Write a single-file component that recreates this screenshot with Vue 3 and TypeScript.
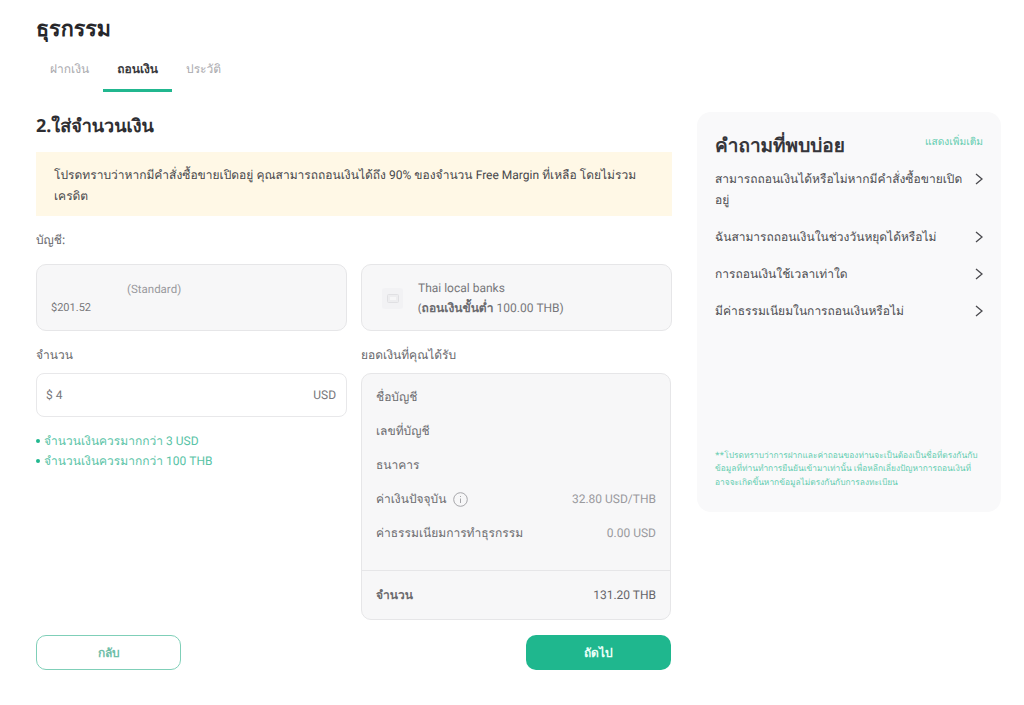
<script setup lang="ts">
const tabs = [
  { label: 'ฝากเงิน', active: false },
  { label: 'ถอนเงิน', active: true },
  { label: 'ประวัติ', active: false },
]
const faqs: string[][] = [
  ['สามารถถอนเงินได้หรือไม่หากมีคำสั่งซื้อขายเปิด', 'อยู่'],
  ['ฉันสามารถถอนเงินในช่วงวันหยุดได้หรือไม่'],
  ['การถอนเงินใช้เวลาเท่าใด'],
  ['มีค่าธรรมเนียมในการถอนเงินหรือไม่'],
]
const footnote = [
  '**โปรดทราบว่าการฝากและค่าถอนของท่านจะเป็นต้องเป็นชื่อที่ตรงกันกับ',
  'ข้อมูลที่ท่านทำการยืนยันเข้ามาเท่านั้น เพื่อหลีกเลี่ยงปัญหาการถอนเงินที่',
  'อาจจะเกิดขึ้นหากข้อมูลไม่ตรงกันกับการลงทะเบียน',
]
</script>

<template>
  <div class="page">
    <h1 class="title">ธุรกรรม</h1>
    <nav class="tabs">
      <span v-for="t in tabs" :key="t.label" class="tab" :class="{ active: t.active }">{{ t.label }}</span>
    </nav>
    <div class="columns">
      <main class="main">
        <h2 class="heading">2.ใส่จำนวนเงิน</h2>
        <p class="notice">โปรดทราบว่าหากมีคำสั่งซื้อขายเปิดอยู่ คุณสามารถถอนเงินได้ถึง <span class="lat">90%</span> ของจำนวน <span class="lat">Free Margin</span> ที่เหลือ โดยไม่รวม<br />เครดิต</p>
        <div class="label account-label">บัญชี:</div>
        <div class="two">
          <div class="card account">
            <div class="std">(Standard)</div>
            <div class="balance">$201.52</div>
          </div>
          <div class="card bank">
            <span class="bank-icon">
              <svg width="12" height="9" viewBox="0 0 12 9"><rect x="0.5" y="0.5" width="11" height="8" rx="1" fill="#ededef" stroke="#e0e0e3" /><rect x="3" y="3" width="6" height="3" fill="#f6f6f7" /></svg>
            </span>
            <div class="bank-text">
              <div class="lat">Thai local banks</div>
              <div>(<b class="semi">ถอนเงินขั้นต่ำ</b> <span class="lat">100.00 THB)</span></div>
            </div>
          </div>
        </div>
        <div class="two fields">
          <div>
            <div class="label">จำนวน</div>
            <div class="input"><span class="lat">$ 4</span><span class="lat">USD</span></div>
            <ul class="rules">
              <li><span>จำนวนเงินควรมากกว่า <span class="lat">3 USD</span></span></li>
              <li><span>จำนวนเงินควรมากกว่า <span class="lat">100 THB</span></span></li>
            </ul>
          </div>
          <div>
            <div class="label">ยอดเงินที่คุณได้รับ</div>
            <div class="summary">
              <div class="rows">
                <div class="row dark">ชื่อบัญชี</div>
                <div class="row dark">เลขที่บัญชี</div>
                <div class="row dark">ธนาคาร</div>
                <div class="row">
                  <span class="dark rate">ค่าเงินปัจจุบัน
                    <svg width="15" height="15" viewBox="0 0 15 15" fill="none" stroke="#a6a6aa"><circle cx="7.5" cy="7.5" r="6.8" /><path d="M7.5 4v1M7.5 6.5v4.5" /></svg>
                  </span>
                  <span class="lat">32.80 USD/THB</span>
                </div>
                <div class="row"><span class="dark">ค่าธรรมเนียมการทำธุรกรรม</span><span class="lat">0.00 USD</span></div>
              </div>
              <div class="total"><b class="semi">จำนวน</b><span class="lat">131.20 THB</span></div>
            </div>
          </div>
        </div>
        <div class="actions">
          <button class="btn back" type="button">กลับ</button>
          <button class="btn next" type="button">ถัดไป</button>
        </div>
      </main>
      <aside class="faq">
        <div class="faq-head">
          <h3>คำถามที่พบบ่อย</h3>
          <span class="more">แสดงเพิ่มเติม</span>
        </div>
        <div v-for="f in faqs" :key="f[0]" class="faq-row">
          <div>
            <div v-for="line in f" :key="line" class="line">{{ line }}</div>
          </div>
          <svg class="chev" width="8" height="12" viewBox="0 0 8 12" fill="none" stroke="#4a4a4e" stroke-width="1.3"><path d="M1 1l6 5-6 5" /></svg>
        </div>
        <div class="footnote">
          <div v-for="line in footnote" :key="line" class="line">{{ line }}</div>
        </div>
      </aside>
    </div>
  </div>
</template>

<style>
html, body { background: #fff; }
</style>

<style scoped>
.page {
  width: 1024px;
  height: 705px;
  box-sizing: border-box;
  padding: 15px 23px 0 36px;
  overflow: hidden;
  font-family: "Noto Sans", sans-serif;
  font-size: 12px;
  color: #77777b;
  text-rendering: geometricPrecision;
}
.line { white-space: nowrap; }
.lat { font-family: Roboto, sans-serif; font-size: 12px; }
.title {
  margin: 0;
  font-size: 21.5px;
  line-height: 28px;
  font-weight: 700;
  color: #26262a;
}
.tabs { display: flex; margin-top: 5px; }
.tab {
  height: 44px;
  padding: 0 14px;
  box-sizing: border-box;
  line-height: 42px;
  text-align: center;
  color: #a9a9ad;
}
.tab.active {
  color: #38383c;
  font-weight: 700;
  border-bottom: 3px solid #21b78f;
}
.columns { display: flex; gap: 25px; }
.main { width: 636px; flex: none; }
.heading {
  margin: 21px 0 0;
  font-size: 18px;
  line-height: 26px;
  font-weight: 700;
  color: #2e2e32;
}
.notice {
  margin: 13px 0 0;
  height: 64px;
  box-sizing: border-box;
  padding: 13px 18px;
  background: #fff8e6;
  color: #46464a;
  line-height: 19.5px;
  white-space: nowrap;
}
.label { line-height: 18px; color: #66666a; }
.account-label { margin-top: 15px; }
.two { display: grid; grid-template-columns: 311px 311px; gap: 14px; }
.card {
  height: 67px;
  margin-top: 15px;
  box-sizing: border-box;
  border: 1px solid #e6e6e8;
  border-radius: 10px;
  background: #f7f7f8;
  line-height: 18px;
}
.account { padding: 15px 14px; }
.std { padding-left: 76px; font-family: Roboto, sans-serif; font-size: 11.5px; color: #9a9a9e; }
.balance { font-family: Roboto, sans-serif; font-size: 11px; margin-top: 1px; }
.bank { display: flex; align-items: center; gap: 15px; padding: 2px 0 0 20px; }
.bank-text { line-height: 19px; }
.bank-icon {
  width: 21px;
  height: 21px;
  display: flex;
  align-items: center;
  justify-content: center;
  background: #f2f2f4;
  border-radius: 3px;
}
.semi { font-weight: 600; color: #6a6a6e; }
.fields { margin-top: 15px; }
.input {
  height: 44px;
  margin-top: 9px;
  box-sizing: border-box;
  display: flex;
  align-items: center;
  justify-content: space-between;
  padding: 0 10px 0 9px;
  border: 1px solid #e8e8ea;
  border-radius: 8px;
  background: #fff;
}
.rules {
  margin: 14px 0 0;
  padding: 0;
  list-style: none;
  color: #58c3a6;
  line-height: 20px;
}
.rules li { display: flex; align-items: center; gap: 4px; }
.rules li::before {
  content: "";
  width: 4px;
  height: 4px;
  border-radius: 50%;
  background: #21b78f;
}
.summary {
  margin-top: 9px;
  margin-right: 1px;
  height: 247px;
  box-sizing: border-box;
  border: 1px solid #e6e6e8;
  border-radius: 10px;
  background: #f7f7f8;
  display: flex;
  flex-direction: column;
  justify-content: space-between;
}
.rows { padding: 7px 14px 0; }
.row {
  height: 33.8px;
  display: flex;
  align-items: center;
  justify-content: space-between;
  color: #9a9a9e;
}
.dark { color: #6a6a6e; }
.rate { display: flex; align-items: center; gap: 7px; }
.total {
  height: 49px;
  box-sizing: border-box;
  padding: 0 14px;
  border-top: 1px solid #e6e6e8;
  display: flex;
  align-items: center;
  justify-content: space-between;
  color: #66666a;
}
.actions { display: flex; justify-content: space-between; margin-top: 15px; padding-right: 1px; }
.btn {
  width: 145px;
  height: 35px;
  border-radius: 10px;
  font: inherit;
  font-weight: 600;
  padding: 0;
}
.back { background: #fff; border: 1px solid #7fcfb8; color: #6fbea8; }
.next { background: #1fb78e; border: none; color: #eafff8; }
.faq {
  width: 304px;
  height: 400px;
  margin-top: 20px;
  box-sizing: border-box;
  padding: 18px 18px 0;
  border-radius: 14px;
  background: #f9f9fa;
  color: #4c4c50;
  display: flex;
  flex-direction: column;
}
.faq-head { display: flex; justify-content: space-between; align-items: flex-start; }
.faq-head h3 {
  margin: 0;
  font-size: 19px;
  line-height: 30px;
  font-weight: 700;
  color: #36363a;
}
.more { font-size: 10.2px; line-height: 22px; color: #63cdb0; }
.faq-row {
  display: flex;
  justify-content: space-between;
  align-items: flex-start;
  gap: 8px;
  margin-bottom: 16.5px;
  line-height: 20.5px;
}
.faq-head + .faq-row { margin-top: 9px; }
.chev { flex: none; margin-top: 4px; }
.footnote {
  margin: auto 0 23px;
  font-size: 8.4px;
  line-height: 13.5px;
  color: #63cdb0;
}
</style>
